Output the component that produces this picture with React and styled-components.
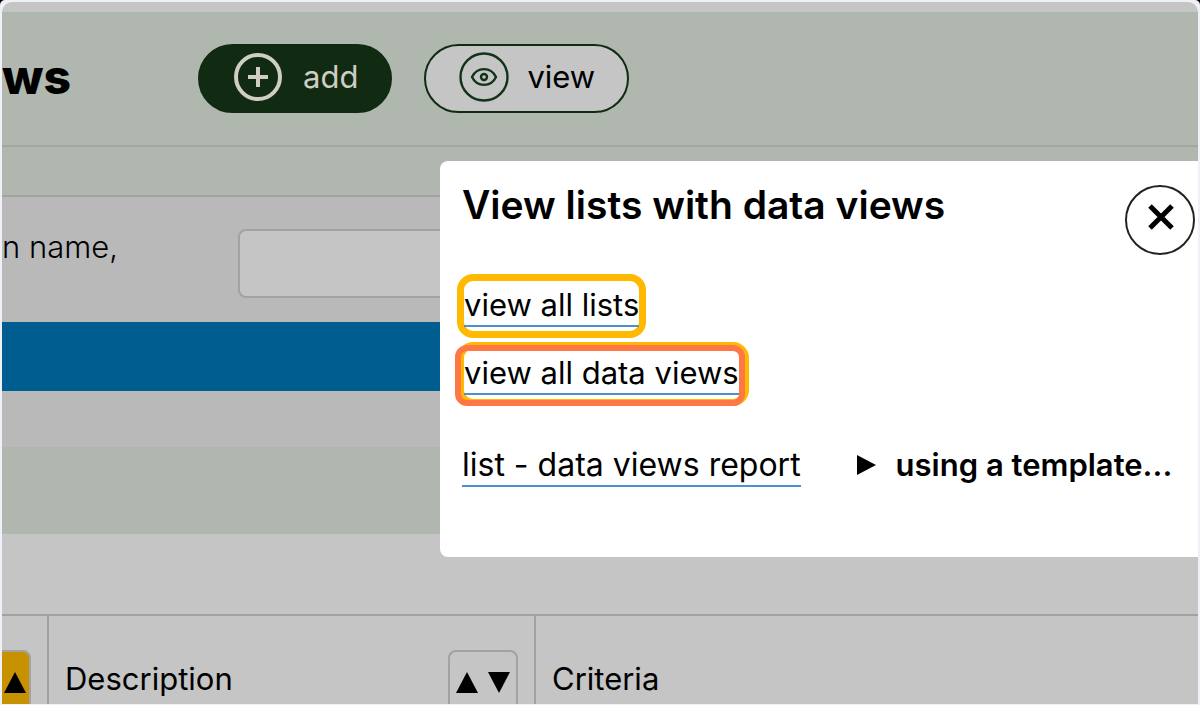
import React from "react";
import styled, { createGlobalStyle } from "styled-components";

const Global = createGlobalStyle`
  *, *::before, *::after { box-sizing: border-box; }
  body {
    margin: 0;
    background: #000;
    color: #000;
    font-family: Inter, "Liberation Sans", sans-serif;
    font-size: 31px;
    line-height: 36px;
  }
  button, input { font: inherit; color: inherit; }
`;

const Page = styled.div`
  height: 100vh;
  padding: 2px 2px 1px;
  border-radius: 5px 5px 0 0;
  background: #f0f0f8;
`;

const Frame = styled.div`
  position: relative;
  display: flex;
  flex-direction: column;
  height: 100%;
  overflow: hidden;
  border-radius: 10px 10px 0 0;
  background: #c5c5c5;
`;

const Header = styled.header`
  display: flex;
  align-items: center;
  flex: none;
  height: 135px;
  margin-top: 10px;
  border-bottom: 2px solid #a2a5a2;
  background: #afb7ae;
`;

const PageTitle = styled.h1`
  width: 196px;
  margin: 0;
  padding-bottom: 4px;
  font-size: 48px;
  font-weight: 800;
`;

const PillButton = styled.button`
  display: flex;
  align-items: center;
  gap: ${(p) => (p.$primary ? 20 : 18)}px;
  height: 69px;
  margin-right: 32px;
  padding: 0 32px 4px 33px;
  border: 2px solid #112b12;
  border-radius: 35px;
  background: ${(p) => (p.$primary ? "#112b12" : "#c5c5c5")};
  color: ${(p) => (p.$primary ? "#cfcdc4" : "#000")};
`;

const Strip = styled.div`
  flex: none;
  height: ${(p) => p.$height}px;
  background: #afb7ae;
`;

const Filters = styled.section`
  flex: none;
  padding: 32px 0 56px;
  border-top: 2px solid #a2a2a2;
  background: #b9b9b9;
`;

const FilterRow = styled.div`
  display: flex;
  align-items: flex-start;
  margin-bottom: 24px;
`;

const FilterLabel = styled.label`
  width: 236px;
  font-weight: 300;
`;

const FilterInput = styled.input`
  flex: 1;
  height: 69px;
  padding: 0 16px;
  border: 2px solid #a2a2a2;
  border-radius: 8px;
  background: #c5c5c5;
`;

const SearchButton = styled.button`
  display: block;
  width: 100%;
  height: 69px;
  border: 0;
  background: #005d90;
`;

const Table = styled.table`
  flex: none;
  width: 100%;
  margin-top: 80px;
  border-collapse: separate;
  border-spacing: 0;
  border-top: 2px solid #a2a2a2;
  table-layout: fixed;
`;

const HeadCell = styled.th`
  width: ${(p) => p.$width || "auto"};
  height: 126px;
  padding: 0;
  overflow: hidden;
  border-left: ${(p) => (p.$first ? 0 : 2)}px solid #a2a2a2;
  font-weight: 400;
  text-align: left;
`;

const HeadInner = styled.div`
  display: flex;
  align-items: center;
  justify-content: ${(p) => (p.$end ? "flex-end" : "space-between")};
  height: 70px;
  padding: 0 16px;
`;

const SortButton = styled.button`
  display: flex;
  align-items: center;
  justify-content: center;
  flex: none;
  gap: ${(p) => (p.$active ? 16 : 10)}px;
  width: 70px;
  height: 70px;
  margin-top: 12px;
  padding: 0 0 6px;
  border: 2px solid #a2a2a2;
  border-radius: 8px;
  background: ${(p) => (p.$active ? "#c69200" : "transparent")};
`;

const Dialog = styled.section`
  position: absolute;
  top: 159px;
  left: 438px;
  right: 0;
  height: 396px;
  padding: 24px 3px 0 22px;
  border-radius: 8px 0 0 8px;
  background: #fff;
`;

const DialogHeader = styled.div`
  display: flex;
  align-items: flex-start;
  justify-content: space-between;
`;

const DialogTitle = styled.h2`
  margin: 0;
  font-size: 39px;
  font-weight: 600;
  line-height: 40px;
`;

const CloseButton = styled.button`
  display: flex;
  align-items: center;
  justify-content: center;
  width: 70px;
  height: 70px;
  padding: 0 0 6px 2px;
  border: 2px solid #222;
  border-radius: 50%;
  background: #fff;
`;

const LinkList = styled.ul`
  display: flex;
  flex-direction: column;
  align-items: flex-start;
  gap: 4px;
  margin: 19px 0 0 -5px;
  padding: 0;
  list-style: none;
`;

const LinkBox = styled.li`
  position: relative;
  height: 64px;
  padding: 6px 0;
  border: 7px solid #ffb900;
  border-radius: 16px;

  ${(p) =>
    p.$selected &&
    `padding-right: 3px;
    &::after {
      content: "";
      position: absolute;
      inset: -4px -3px -7px -9px;
      border: 6px solid #ff7744;
      border-radius: 12px;
    }`}
`;

const TextLink = styled.a`
  display: block;
  height: 40px;
  border-bottom: 2px solid #4f8fcb;
  color: inherit;
  text-decoration: none;
  white-space: nowrap;
`;

const DialogFooter = styled.div`
  display: flex;
  gap: 56px;
  margin-top: 41px;
  font-size: 32px;
`;

const Template = styled.details`
  font-size: 31px;
  font-weight: 600;
`;

const TemplateSummary = styled.summary`
  display: flex;
  align-items: center;
  gap: 20px;
  list-style: none;
  white-space: nowrap;
`;

const Triangle = ({ points, width = 22, height = 22 }) => (
  <svg width={width} height={height} viewBox={`0 0 ${width} ${height}`} aria-hidden="true">
    <polygon points={points} fill="#000" />
  </svg>
);
const Up = () => <Triangle points="0,22 11,1 22,22" />;
const Down = () => <Triangle points="0,1 22,1 11,22" />;

const PlusIcon = () => (
  <svg width="50" height="50" viewBox="0 0 50 50" fill="none" stroke="#cfcdc4" aria-hidden="true">
    <circle cx="25" cy="25" r="22" strokeWidth="4" />
    <path d="M25 15v20M15 25h20" strokeWidth="4" />
  </svg>
);

const EyeIcon = () => (
  <svg width="50" height="50" viewBox="0 0 50 50" fill="none" stroke="#123317" aria-hidden="true">
    <circle cx="25" cy="25" r="23.5" strokeWidth="2.4" />
    <path d="M13 25C18 14.500 32 14.500 37 25C32 35.500 18 35.500 13 25Z" strokeWidth="2.400" strokeLinejoin="round" />
    <circle cx="25" cy="25" r="3" strokeWidth="2.400" />
  </svg>
);

const CloseIcon = () => (
  <svg width="26" height="26" viewBox="0 0 26 26" fill="none" stroke="#000" strokeWidth="5" aria-hidden="true">
    <path d="M2 2L24 24M24 2L2 24" />
  </svg>
);

export default function App() {
  return (
    <>
      <Global />
      <Page>
        <Frame>
          <Header>
            <PageTitle>ws</PageTitle>
            <PillButton $primary><PlusIcon />add</PillButton>
            <PillButton><EyeIcon />view</PillButton>
          </Header>
          <Strip $height={48} />
          <Filters>
            <FilterRow>
              <FilterLabel htmlFor="name">n name,</FilterLabel>
              <FilterInput id="name" />
            </FilterRow>
            <SearchButton aria-label="Search" />
          </Filters>
          <Strip $height={87} />
          <Table>
            <thead>
              <tr>
                <HeadCell $first $width="45px">
                  <HeadInner $end>
                    <SortButton $active aria-label="Sort"><Down /><Up /></SortButton>
                  </HeadInner>
                </HeadCell>
                <HeadCell $width="487px">
                  <HeadInner>
                    Description
                    <SortButton aria-label="Sort by description"><Up /><Down /></SortButton>
                  </HeadInner>
                </HeadCell>
                <HeadCell><HeadInner>Criteria</HeadInner></HeadCell>
              </tr>
            </thead>
          </Table>
          <Dialog role="dialog" aria-labelledby="dialog-title">
            <DialogHeader>
              <DialogTitle id="dialog-title">View lists with data views</DialogTitle>
              <CloseButton aria-label="Close"><CloseIcon /></CloseButton>
            </DialogHeader>
            <LinkList>
              <LinkBox><TextLink href="#lists">view all lists</TextLink></LinkBox>
              <LinkBox $selected><TextLink href="#views">view all data views</TextLink></LinkBox>
            </LinkList>
            <DialogFooter>
              <TextLink href="#report">list - data views report</TextLink>
              <Template>
                <TemplateSummary>
                  <Triangle points="0,1 19,11 0,21" width={19} />
                  using a template...
                </TemplateSummary>
              </Template>
            </DialogFooter>
          </Dialog>
        </Frame>
      </Page>
    </>
  );
}
